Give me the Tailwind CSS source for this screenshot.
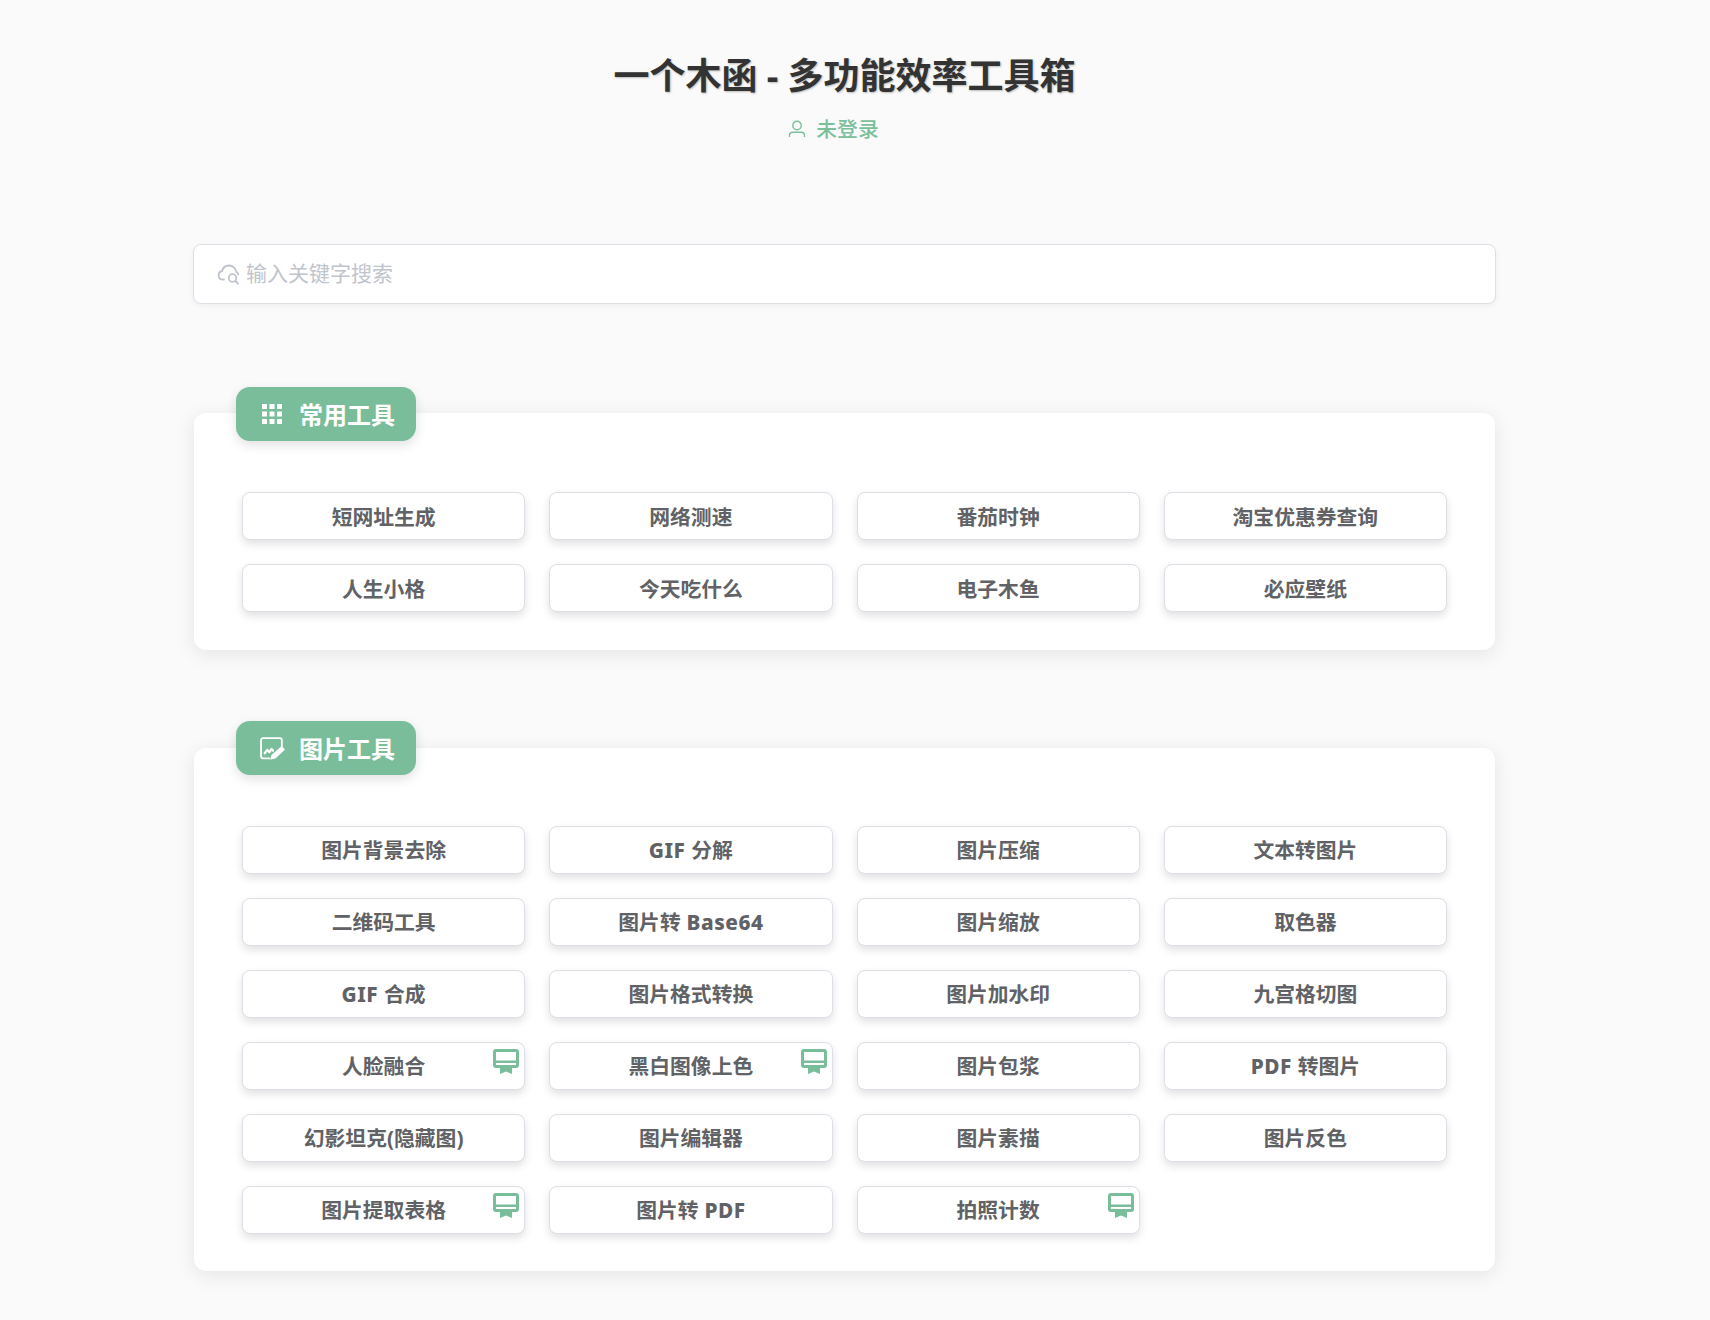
<!DOCTYPE html>
<html lang="zh-CN">
<head>
<meta charset="utf-8">
<title>一个木函</title>
<script src="https://cdn.jsdelivr.net/npm/@tailwindcss/browser@4"></script>
</head>
<body class="bg-[#fafafa] font-['Noto_Sans','Noto_Sans_CJK_SC',sans-serif] text-[20.8px]">
<div class="w-[1689px] min-h-[1320px]">
  <header class="flex flex-col items-center pt-[49px]">
    <h1 class="text-[36px] leading-[54px] font-bold text-[#333] [text-shadow:1px_1px_2px_rgba(0,0,0,0.25)]">一个木函 - 多功能效率工具箱</h1>
    <div class="flex items-center mt-[11px] h-[30px] pr-[22px] text-[#7bbf9b] font-medium text-[20.8px] leading-[30px]">
      <svg class="w-[18px] h-[18px] mr-[10px]" viewBox="0 0 18 18" fill="none" stroke="#7bbf9b" stroke-width="1.400"><circle cx="9" cy="5.500" r="4.200"/><path d="M1.500 17v-1.500c0-2 1.500-3.200 3.500-3.200h8c2 0 3.500 1.200 3.500 3.200V17"/></svg>
      <span>未登录</span>
    </div>
  </header>

  <div class="mx-[193px] mt-[100px] h-[60px] bg-white border border-[#dcdfe6] rounded-[8px] shadow-[0_2px_6px_rgba(0,0,0,0.05)] flex items-center pl-[23px] text-[21px] text-[#c0c4cc]">
    <svg class="w-[24px] h-[24px] mr-[5px]" viewBox="0 0 24 24" fill="none" stroke="#bfc3cc" stroke-width="1.800" stroke-linecap="round"><path d="M7 17.500H5.500a4.300 4.300 0 0 1-.4-8.500C6 5.500 9 3.500 12 3.500c3.800 0 6.800 2.800 7.200 6.300 1 .5 1.800 1.500 2 2.700"/><circle cx="15.500" cy="16" r="3.800"/><path d="M18.500 19l2.500 2.500"/></svg>
    <span>输入关键字搜索</span>
  </div>

  <section class="relative mx-[194px] mt-[109px] bg-white rounded-[12px] shadow-[0_4px_20px_rgba(0,0,0,0.09)] pt-[79px] pb-[38px] px-[48px]">
    <div class="absolute left-[42px] top-[-26px] w-[180px] h-[54px] pt-[2px] bg-[#79bd9a] rounded-[14px] shadow-[0_4px_12px_rgba(0,0,0,0.12)] flex items-center pl-[26px] text-white font-bold text-[24px]">
      <svg class="w-[20px] h-[20px] mr-[17px] -mt-[3px]" viewBox="0 0 20 20" fill="#fff"><rect x="0" y="0" width="5" height="5"/><rect x="7.500" y="0" width="5" height="5"/><rect x="15" y="0" width="5" height="5"/><rect x="0" y="7.500" width="5" height="5"/><rect x="7.500" y="7.500" width="5" height="5"/><rect x="15" y="7.500" width="5" height="5"/><rect x="0" y="15" width="5" height="5"/><rect x="7.500" y="15" width="5" height="5"/><rect x="15" y="15" width="5" height="5"/></svg>
      <span>常用工具</span>
    </div>
    <div class="grid grid-cols-4 gap-x-[24px] gap-y-[24px]">
      <a class="h-[48px] pt-[4px] flex items-center justify-center bg-white border border-[#dcdfe6] rounded-[8px] shadow-[0_4px_8px_rgba(0,0,0,0.12)] text-[#606266] font-bold">短网址生成</a>
      <a class="h-[48px] pt-[4px] flex items-center justify-center bg-white border border-[#dcdfe6] rounded-[8px] shadow-[0_4px_8px_rgba(0,0,0,0.12)] text-[#606266] font-bold">网络测速</a>
      <a class="h-[48px] pt-[4px] flex items-center justify-center bg-white border border-[#dcdfe6] rounded-[8px] shadow-[0_4px_8px_rgba(0,0,0,0.12)] text-[#606266] font-bold">番茄时钟</a>
      <a class="h-[48px] pt-[4px] flex items-center justify-center bg-white border border-[#dcdfe6] rounded-[8px] shadow-[0_4px_8px_rgba(0,0,0,0.12)] text-[#606266] font-bold">淘宝优惠券查询</a>
      <a class="h-[48px] pt-[4px] flex items-center justify-center bg-white border border-[#dcdfe6] rounded-[8px] shadow-[0_4px_8px_rgba(0,0,0,0.12)] text-[#606266] font-bold">人生小格</a>
      <a class="h-[48px] pt-[4px] flex items-center justify-center bg-white border border-[#dcdfe6] rounded-[8px] shadow-[0_4px_8px_rgba(0,0,0,0.12)] text-[#606266] font-bold">今天吃什么</a>
      <a class="h-[48px] pt-[4px] flex items-center justify-center bg-white border border-[#dcdfe6] rounded-[8px] shadow-[0_4px_8px_rgba(0,0,0,0.12)] text-[#606266] font-bold">电子木鱼</a>
      <a class="h-[48px] pt-[4px] flex items-center justify-center bg-white border border-[#dcdfe6] rounded-[8px] shadow-[0_4px_8px_rgba(0,0,0,0.12)] text-[#606266] font-bold">必应壁纸</a>
    </div>
  </section>

  <section class="relative mx-[194px] mt-[98px] bg-white rounded-[12px] shadow-[0_4px_20px_rgba(0,0,0,0.09)] pt-[78px] pb-[37px] px-[48px]">
    <div class="absolute left-[42px] top-[-27px] w-[180px] h-[54px] pt-[2px] bg-[#79bd9a] rounded-[14px] shadow-[0_4px_12px_rgba(0,0,0,0.12)] flex items-center pl-[24px] text-white font-bold text-[24px]">
      <svg class="w-[26px] h-[23px] mr-[13px] -mt-[2px]" viewBox="0 0 25 22" fill="none" stroke="#fff" stroke-width="1.800" stroke-linecap="round" stroke-linejoin="round"><path d="M9 20.500H3a2 2 0 0 1-2-2V3a2 2 0 0 1 2-2h16a2 2 0 0 1 2 2v6"/><path d="M4.500 15.500l2.500-3 2 2 2-3 1.500 1.500" stroke-width="2.200"/><path d="M10.500 21l1.200-3.500 9-8 2.500 2.500-8.500 8z" fill="#fff" stroke-width="1.200"/></svg>
      <span>图片工具</span>
    </div>
    <div class="grid grid-cols-4 gap-x-[24px] gap-y-[24px]">
      <a class="h-[48px] pt-[2px] flex items-center justify-center bg-white border border-[#dcdfe6] rounded-[8px] shadow-[0_4px_8px_rgba(0,0,0,0.12)] text-[#606266] font-bold">图片背景去除</a>
      <a class="h-[48px] pt-[2px] flex items-center justify-center bg-white border border-[#dcdfe6] rounded-[8px] shadow-[0_4px_8px_rgba(0,0,0,0.12)] text-[#606266] font-bold"><span class="font-extrabold tracking-[0.5px] whitespace-pre">GIF </span>分解</a>
      <a class="h-[48px] pt-[2px] flex items-center justify-center bg-white border border-[#dcdfe6] rounded-[8px] shadow-[0_4px_8px_rgba(0,0,0,0.12)] text-[#606266] font-bold">图片压缩</a>
      <a class="h-[48px] pt-[2px] flex items-center justify-center bg-white border border-[#dcdfe6] rounded-[8px] shadow-[0_4px_8px_rgba(0,0,0,0.12)] text-[#606266] font-bold">文本转图片</a>
      <a class="h-[48px] pt-[2px] flex items-center justify-center bg-white border border-[#dcdfe6] rounded-[8px] shadow-[0_4px_8px_rgba(0,0,0,0.12)] text-[#606266] font-bold">二维码工具</a>
      <a class="h-[48px] pt-[2px] flex items-center justify-center bg-white border border-[#dcdfe6] rounded-[8px] shadow-[0_4px_8px_rgba(0,0,0,0.12)] text-[#606266] font-bold">图片转<span class="font-extrabold tracking-[0.5px] whitespace-pre"> Base64</span></a>
      <a class="h-[48px] pt-[2px] flex items-center justify-center bg-white border border-[#dcdfe6] rounded-[8px] shadow-[0_4px_8px_rgba(0,0,0,0.12)] text-[#606266] font-bold">图片缩放</a>
      <a class="h-[48px] pt-[2px] flex items-center justify-center bg-white border border-[#dcdfe6] rounded-[8px] shadow-[0_4px_8px_rgba(0,0,0,0.12)] text-[#606266] font-bold">取色器</a>
      <a class="h-[48px] pt-[2px] flex items-center justify-center bg-white border border-[#dcdfe6] rounded-[8px] shadow-[0_4px_8px_rgba(0,0,0,0.12)] text-[#606266] font-bold"><span class="font-extrabold tracking-[0.5px] whitespace-pre">GIF </span>合成</a>
      <a class="h-[48px] pt-[2px] flex items-center justify-center bg-white border border-[#dcdfe6] rounded-[8px] shadow-[0_4px_8px_rgba(0,0,0,0.12)] text-[#606266] font-bold">图片格式转换</a>
      <a class="h-[48px] pt-[2px] flex items-center justify-center bg-white border border-[#dcdfe6] rounded-[8px] shadow-[0_4px_8px_rgba(0,0,0,0.12)] text-[#606266] font-bold">图片加水印</a>
      <a class="h-[48px] pt-[2px] flex items-center justify-center bg-white border border-[#dcdfe6] rounded-[8px] shadow-[0_4px_8px_rgba(0,0,0,0.12)] text-[#606266] font-bold">九宫格切图</a>
      <a class="relative h-[48px] pt-[2px] flex items-center justify-center bg-white border border-[#dcdfe6] rounded-[8px] shadow-[0_4px_8px_rgba(0,0,0,0.12)] text-[#606266] font-bold">人脸融合
        <svg class="absolute right-[5px] top-[6px] w-[26px] h-[26px]" viewBox="0 0 26 26"><path fill="#79bd9a" fill-rule="evenodd" d="M3 0h20a3 3 0 0 1 3 3v13a3 3 0 0 1-3 3h-4v6l-6-2.500L7 25v-6H3a3 3 0 0 1-3-3V3a3 3 0 0 1 3-3zM3 3v8.500h20V3zM3 14v2h20v-2z"/></svg>
      </a>
      <a class="relative h-[48px] pt-[2px] flex items-center justify-center bg-white border border-[#dcdfe6] rounded-[8px] shadow-[0_4px_8px_rgba(0,0,0,0.12)] text-[#606266] font-bold">黑白图像上色
        <svg class="absolute right-[5px] top-[6px] w-[26px] h-[26px]" viewBox="0 0 26 26"><path fill="#79bd9a" fill-rule="evenodd" d="M3 0h20a3 3 0 0 1 3 3v13a3 3 0 0 1-3 3h-4v6l-6-2.500L7 25v-6H3a3 3 0 0 1-3-3V3a3 3 0 0 1 3-3zM3 3v8.500h20V3zM3 14v2h20v-2z"/></svg>
      </a>
      <a class="h-[48px] pt-[2px] flex items-center justify-center bg-white border border-[#dcdfe6] rounded-[8px] shadow-[0_4px_8px_rgba(0,0,0,0.12)] text-[#606266] font-bold">图片包浆</a>
      <a class="h-[48px] pt-[2px] flex items-center justify-center bg-white border border-[#dcdfe6] rounded-[8px] shadow-[0_4px_8px_rgba(0,0,0,0.12)] text-[#606266] font-bold"><span class="font-extrabold tracking-[0.5px] whitespace-pre">PDF </span>转图片</a>
      <a class="h-[48px] pt-[2px] flex items-center justify-center bg-white border border-[#dcdfe6] rounded-[8px] shadow-[0_4px_8px_rgba(0,0,0,0.12)] text-[#606266] font-bold">幻影坦克(隐藏图)</a>
      <a class="h-[48px] pt-[2px] flex items-center justify-center bg-white border border-[#dcdfe6] rounded-[8px] shadow-[0_4px_8px_rgba(0,0,0,0.12)] text-[#606266] font-bold">图片编辑器</a>
      <a class="h-[48px] pt-[2px] flex items-center justify-center bg-white border border-[#dcdfe6] rounded-[8px] shadow-[0_4px_8px_rgba(0,0,0,0.12)] text-[#606266] font-bold">图片素描</a>
      <a class="h-[48px] pt-[2px] flex items-center justify-center bg-white border border-[#dcdfe6] rounded-[8px] shadow-[0_4px_8px_rgba(0,0,0,0.12)] text-[#606266] font-bold">图片反色</a>
      <a class="relative h-[48px] pt-[2px] flex items-center justify-center bg-white border border-[#dcdfe6] rounded-[8px] shadow-[0_4px_8px_rgba(0,0,0,0.12)] text-[#606266] font-bold">图片提取表格
        <svg class="absolute right-[5px] top-[6px] w-[26px] h-[26px]" viewBox="0 0 26 26"><path fill="#79bd9a" fill-rule="evenodd" d="M3 0h20a3 3 0 0 1 3 3v13a3 3 0 0 1-3 3h-4v6l-6-2.500L7 25v-6H3a3 3 0 0 1-3-3V3a3 3 0 0 1 3-3zM3 3v8.500h20V3zM3 14v2h20v-2z"/></svg>
      </a>
      <a class="h-[48px] pt-[2px] flex items-center justify-center bg-white border border-[#dcdfe6] rounded-[8px] shadow-[0_4px_8px_rgba(0,0,0,0.12)] text-[#606266] font-bold">图片转<span class="font-extrabold tracking-[0.5px] whitespace-pre"> PDF</span></a>
      <a class="relative h-[48px] pt-[2px] flex items-center justify-center bg-white border border-[#dcdfe6] rounded-[8px] shadow-[0_4px_8px_rgba(0,0,0,0.12)] text-[#606266] font-bold">拍照计数
        <svg class="absolute right-[5px] top-[6px] w-[26px] h-[26px]" viewBox="0 0 26 26"><path fill="#79bd9a" fill-rule="evenodd" d="M3 0h20a3 3 0 0 1 3 3v13a3 3 0 0 1-3 3h-4v6l-6-2.500L7 25v-6H3a3 3 0 0 1-3-3V3a3 3 0 0 1 3-3zM3 3v8.500h20V3zM3 14v2h20v-2z"/></svg>
      </a>
    </div>
  </section>
</div>
</body>
</html>
